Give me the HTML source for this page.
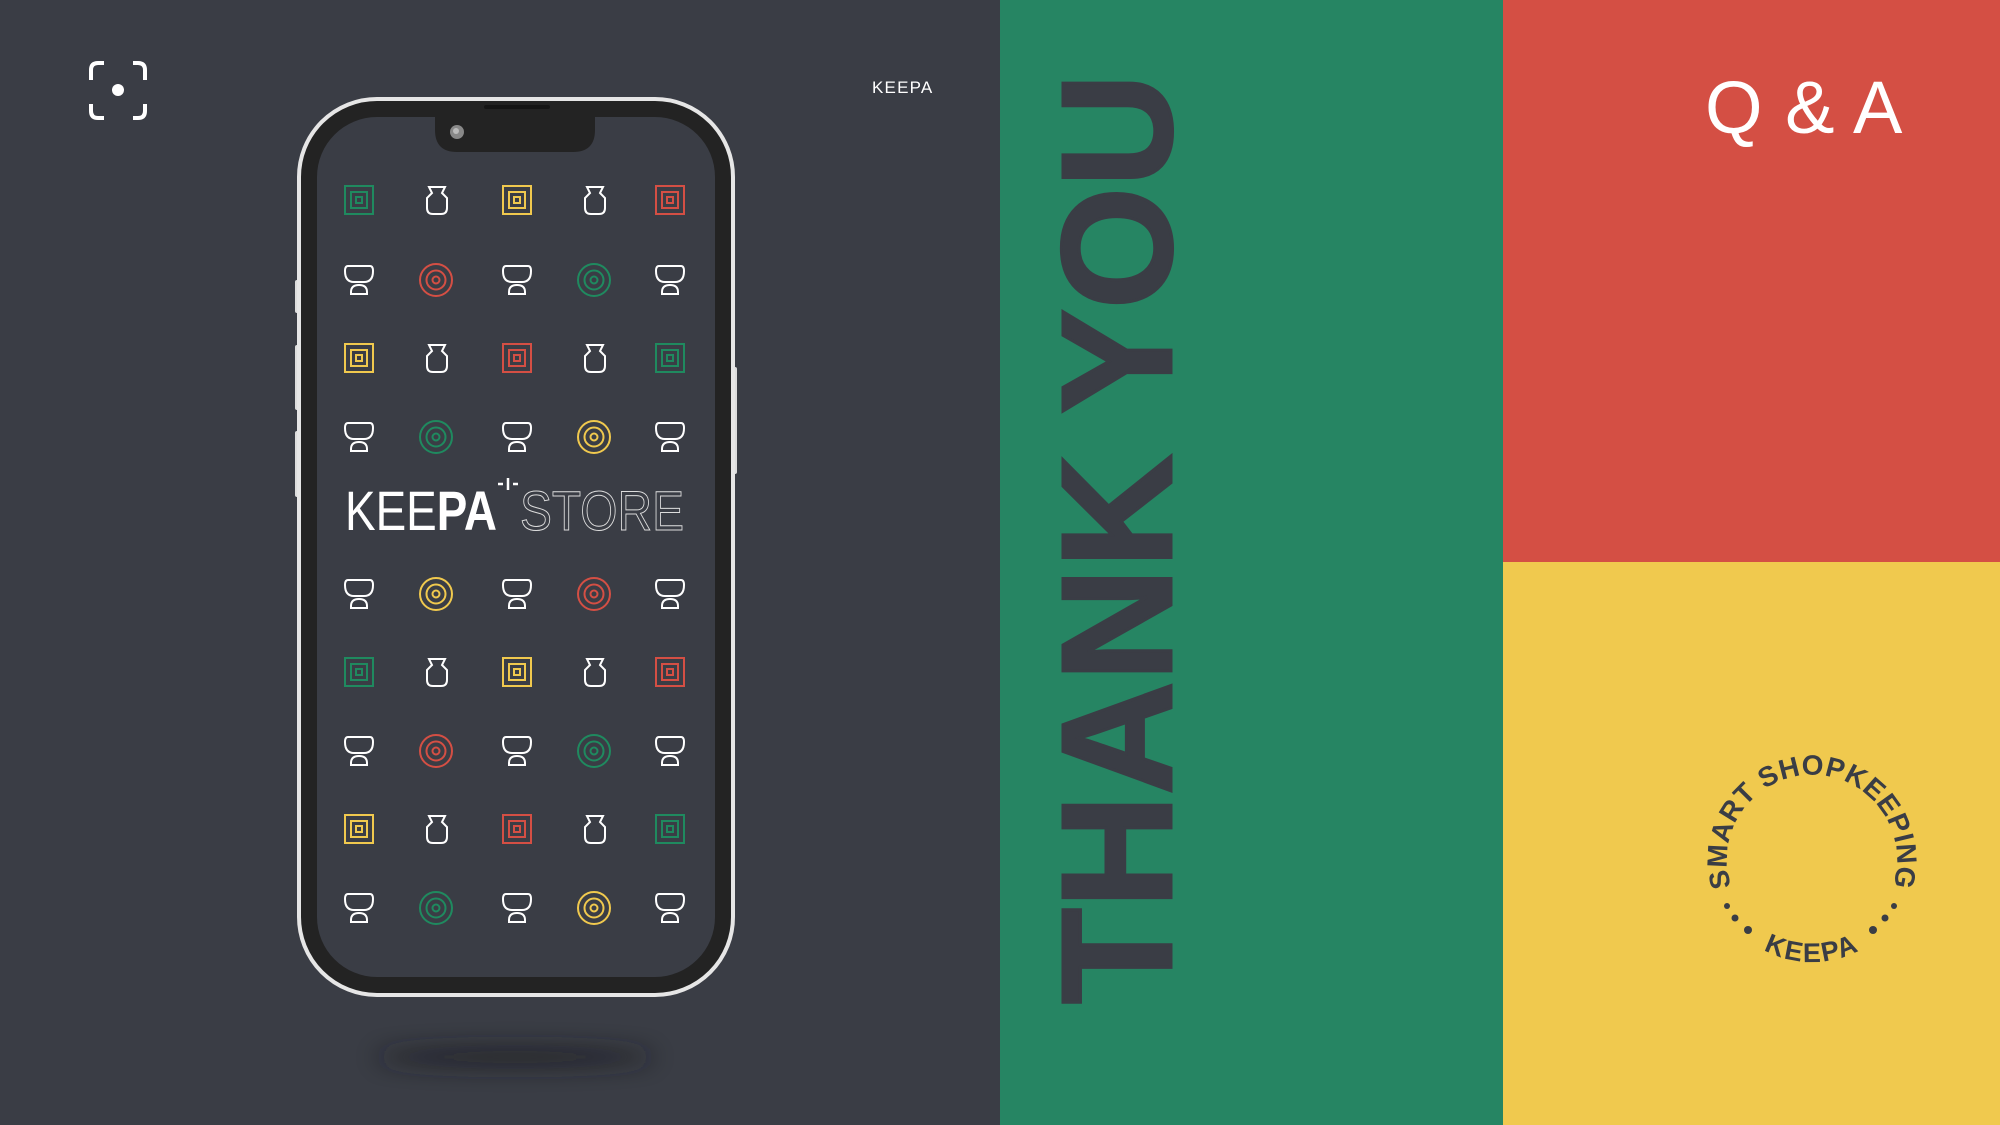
<!DOCTYPE html>
<html><head><meta charset="utf-8"><style>
html,body{margin:0;padding:0}
body{width:2000px;height:1125px;position:relative;overflow:hidden;background:#3a3d45;font-family:"Liberation Sans",sans-serif}
.abs{position:absolute}
</style></head><body>
<div class="abs" style="left:1000px;top:0;width:503px;height:1125px;background:#268563"></div>
<div class="abs" style="left:1503px;top:0;width:497px;height:562px;background:#d44f44"></div>
<div class="abs" style="left:1503px;top:562px;width:497px;height:563px;background:#f0c94e"></div>

<div class="abs" style="left:872px;top:78px;color:#fff;font-size:17px;letter-spacing:1.2px">KEEPA</div>
<div class="abs" style="left:1705px;top:66px;color:#fff;font-size:74px;line-height:84px;letter-spacing:1px;white-space:pre">Q &amp; A</div>

<div class="abs" style="left:1053px;top:1004px;transform-origin:0 0;transform:rotate(-90deg);width:960px;height:120px;">
<div style="font-weight:bold;font-size:157px;line-height:115px;height:115px;color:#3a3d45;-webkit-text-stroke:3px #3a3d45;letter-spacing:0px;white-space:nowrap;margin-top:7px">THANK YOU</div>
</div>

<svg class="abs" style="left:0;top:0" width="2000" height="1125" viewBox="0 0 2000 1125">
<defs>
<filter id="bl" x="-50%" y="-300%" width="200%" height="700%"><feGaussianBlur stdDeviation="12"/></filter>
<g id="sq" fill="none" stroke-width="2"><rect x="-14" y="-14" width="28" height="28"/><rect x="-8" y="-8" width="16" height="16"/><rect x="-3" y="-3" width="6" height="6"/></g>
<g id="ci" fill="none" stroke-width="2"><circle r="16"/><circle r="9.5"/><circle r="3.5"/></g>
<path id="va" fill="none" stroke="#fff" stroke-width="2" d="M-8,-13 H8 L5,-7 L10,-2 V8 Q10,14 4,14 H-4 Q-10,14 -10,8 V-2 L-5,-7 Z"/>
<g id="cu" fill="none" stroke="#fff" stroke-width="2"><path d="M-11,-14 H11 Q14,-14 14,-9 Q14,2 5,2 H-5 Q-14,2 -14,-9 Q-14,-14 -11,-14 Z"/><path d="M-8,14 V12 Q-8,5 0,5 Q8,5 8,12 V14 Z"/></g>
</defs>
<g fill="none" stroke="#fff" stroke-width="4">
<path d="M91,80 V70 Q91,63 98,63 H104"/><path d="M133,63 H138 Q145,63 145,70 V80"/>
<path d="M91,104 V111 Q91,118 98,118 H104"/><path d="M133,118 H138 Q145,118 145,111 V104"/>
</g>
<circle cx="118" cy="90" r="6" fill="#fff"/>
<ellipse cx="515" cy="1057" rx="140" ry="9" fill="#1e1f24" filter="url(#bl)" opacity="0.8"/>
<rect x="295" y="280" width="6" height="33" rx="2" fill="#ddd"/>
<rect x="295" y="345" width="6" height="65" rx="2" fill="#ddd"/>
<rect x="295" y="431" width="6" height="66" rx="2" fill="#ddd"/>
<rect x="731" y="367" width="6" height="107" rx="2" fill="#ddd"/>
<rect x="299" y="99" width="434" height="896" rx="78" fill="#232323" stroke="#e6e6e6" stroke-width="4"/>
<rect x="317" y="117" width="398" height="860" rx="60" fill="#3a3d45"/>
<path d="M435,117 H595 V130 Q595,152 573,152 H457 Q435,152 435,130 Z" fill="#232323"/>
<rect x="484" y="105" width="66" height="4" rx="2" fill="#151515"/>
<circle cx="457" cy="132" r="7" fill="#888"/><circle cx="456" cy="131" r="3" fill="#bbb"/>
<g>
<use href="#sq" x="359" y="200" stroke="#1f8a5f"/><use href="#va" x="437" y="200"/><use href="#sq" x="517" y="200" stroke="#f0c94e"/><use href="#va" x="595" y="200"/><use href="#sq" x="670" y="200" stroke="#d44f44"/>
<use href="#cu" x="359" y="280"/><use href="#ci" x="436" y="280" stroke="#d44f44"/><use href="#cu" x="517" y="280"/><use href="#ci" x="594" y="280" stroke="#1f8a5f"/><use href="#cu" x="670" y="280"/>
<use href="#sq" x="359" y="358" stroke="#f0c94e"/><use href="#va" x="437" y="358"/><use href="#sq" x="517" y="358" stroke="#d44f44"/><use href="#va" x="595" y="358"/><use href="#sq" x="670" y="358" stroke="#1f8a5f"/>
<use href="#cu" x="359" y="437"/><use href="#ci" x="436" y="437" stroke="#1f8a5f"/><use href="#cu" x="517" y="437"/><use href="#ci" x="594" y="437" stroke="#f0c94e"/><use href="#cu" x="670" y="437"/>
<use href="#cu" x="359" y="594"/><use href="#ci" x="436" y="594" stroke="#f0c94e"/><use href="#cu" x="517" y="594"/><use href="#ci" x="594" y="594" stroke="#d44f44"/><use href="#cu" x="670" y="594"/>
<use href="#sq" x="359" y="672" stroke="#1f8a5f"/><use href="#va" x="437" y="672"/><use href="#sq" x="517" y="672" stroke="#f0c94e"/><use href="#va" x="595" y="672"/><use href="#sq" x="670" y="672" stroke="#d44f44"/>
<use href="#cu" x="359" y="751"/><use href="#ci" x="436" y="751" stroke="#d44f44"/><use href="#cu" x="517" y="751"/><use href="#ci" x="594" y="751" stroke="#1f8a5f"/><use href="#cu" x="670" y="751"/>
<use href="#sq" x="359" y="829" stroke="#f0c94e"/><use href="#va" x="437" y="829"/><use href="#sq" x="517" y="829" stroke="#d44f44"/><use href="#va" x="595" y="829"/><use href="#sq" x="670" y="829" stroke="#1f8a5f"/>
<use href="#cu" x="359" y="908"/><use href="#ci" x="436" y="908" stroke="#1f8a5f"/><use href="#cu" x="517" y="908"/><use href="#ci" x="594" y="908" stroke="#f0c94e"/><use href="#cu" x="670" y="908"/>
</g>
<text x="345" y="530" font-family="Liberation Sans, sans-serif" font-size="56" fill="#fff" textLength="152" lengthAdjust="spacingAndGlyphs">KEE<tspan font-weight="bold">PA</tspan></text>
<g stroke="#fff" stroke-width="2.5"><path d="M508,478 V490"/><path d="M503,484 H498"/><path d="M513,484 H518"/></g>
<text x="520" y="530" font-family="Liberation Sans, sans-serif" font-size="56" fill="none" stroke="#ddd" stroke-width="1" textLength="164" lengthAdjust="spacingAndGlyphs">STORE</text>
<path id="tp" d="M1752,920 A85,85 0 1 1 1872,920" fill="none"/>
<path id="bp" d="M1710,860 A102,102 0 0 0 1914,860" fill="none"/>
<text font-family="Liberation Sans, sans-serif" font-weight="bold" font-size="28" fill="#3a3d45" letter-spacing="0.5"><textPath href="#tp" startOffset="50%" text-anchor="middle">SMART SHOPKEEPING</textPath></text>
<text font-family="Liberation Sans, sans-serif" font-weight="bold" font-size="27" fill="#3a3d45" letter-spacing="2"><textPath href="#bp" startOffset="50%" text-anchor="middle">KEEPA</textPath></text>
<g fill="#3a3d45"><circle cx="1727" cy="906" r="3"/><circle cx="1735" cy="918" r="3.5"/><circle cx="1748" cy="930" r="4"/><circle cx="1894" cy="906" r="3"/><circle cx="1885" cy="918" r="3.5"/><circle cx="1873" cy="930" r="4"/></g>
</svg>
</body></html>
